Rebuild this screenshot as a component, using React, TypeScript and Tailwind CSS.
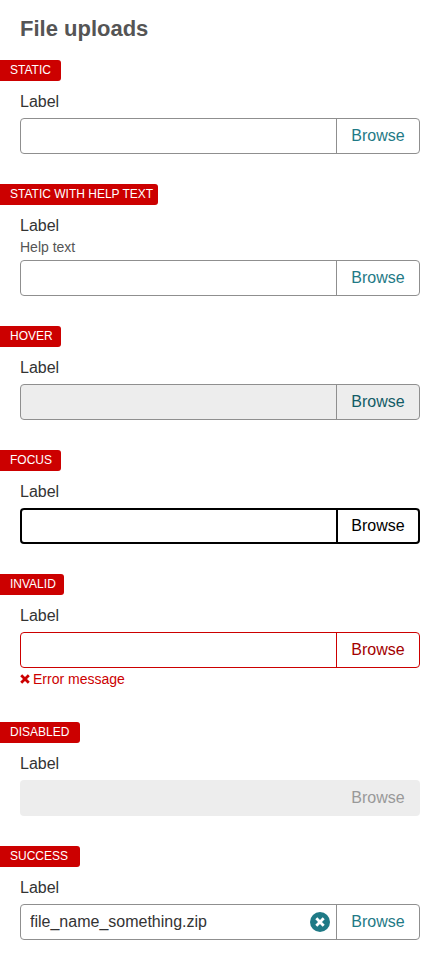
import { useId, useState } from "react";

type State = "static" | "hover" | "focus" | "invalid" | "disabled";

const frames: Record<State, string> = {
  static: "border border-[#8f8f8f] bg-white",
  hover: "border border-[#8f8f8f] bg-[#ededed]",
  focus: "border-2 border-black bg-white",
  invalid: "border border-[#cc0000] bg-white",
  disabled: "bg-[#ededed]",
};

const buttons: Record<State, string> = {
  static: "w-[83px] border-l border-[#8f8f8f] text-[#1f7a86]",
  hover: "w-[83px] border-l border-[#8f8f8f] text-[#135c66]",
  focus: "w-[82px] border-l-2 border-black text-black",
  invalid: "w-[83px] border-l border-[#cc0000] text-[#a30000]",
  disabled: "w-[84px] text-[#999999]",
};

const badges = {
  sm: "w-[61px]",
  md: "w-16",
  lg: "w-20",
  xl: "w-[158px]",
};

interface UploadProps {
  title: string;
  badge?: keyof typeof badges;
  state?: State;
  help?: string;
  error?: string;
  file?: string;
}

function Upload({ title, badge = "sm", state = "static", help, error, file = "" }: UploadProps) {
  const id = useId();
  const [name, setName] = useState(file);
  const disabled = state === "disabled";

  return (
    <section>
      <h2
        className={`rounded-r-[3px] bg-[#cc0000] pl-[10px] text-[12px] leading-[21px] whitespace-nowrap text-white uppercase ${badges[badge]}`}
      >
        {title}
      </h2>
      <div className="px-5 pt-[9px]">
        <label htmlFor={id} className="block text-base leading-6">
          Label
        </label>
        {help && (
          <p id={`${id}-help`} className="text-[14px] leading-[18px] text-[#555555]">
            {help}
          </p>
        )}
        <div className={`mt-1 flex h-9 overflow-hidden rounded-[4px] ${frames[state]}`}>
          <input
            id={id}
            type="text"
            readOnly
            disabled={disabled}
            value={name}
            aria-invalid={state === "invalid"}
            aria-describedby={error ? `${id}-error` : help ? `${id}-help` : undefined}
            className="min-w-0 flex-1 bg-transparent px-[9px] text-base outline-none"
          />
          {name && (
            <button
              type="button"
              aria-label="Remove file"
              onClick={() => setName("")}
              className="mr-[6px] size-5 shrink-0 self-center"
            >
              <svg viewBox="0 0 20 20" className="size-5" aria-hidden="true">
                <circle cx="10" cy="10" r="10" fill="#1f7a86" />
                <path d="M6.3 6.3 13.7 13.7M13.7 6.3 6.3 13.7" stroke="#fff" strokeWidth="2.8" />
              </svg>
            </button>
          )}
          <button
            type="button"
            disabled={disabled}
            className={`shrink-0 text-center text-base ${buttons[state]}`}
          >
            Browse
          </button>
        </div>
        {error && (
          <p
            id={`${id}-error`}
            className="flex items-center gap-[3px] pb-[2px] text-[14px] leading-[22px] text-[#cc0000]"
          >
            <svg viewBox="0 0 10 10" className="size-[10px]" aria-hidden="true">
              <path d="M1.2 1.2 8.8 8.8M8.8 1.2 1.2 8.8" stroke="currentColor" strokeWidth="2.8" />
            </svg>
            {error}
          </p>
        )}
      </div>
    </section>
  );
}

export default function App() {
  return (
    <main className="bg-white pt-4 pb-5 font-['Liberation_Sans',Arial,sans-serif] text-[#333333]">
      <h1 className="px-5 text-[22px] leading-[26px] font-bold text-[#555555]">File uploads</h1>
      <div className="flex flex-col gap-[30px] pt-[18px]">
        <Upload title="Static" />
        <Upload title="Static with help text" badge="xl" help="Help text" />
        <Upload title="Hover" state="hover" />
        <Upload title="Focus" state="focus" />
        <Upload title="Invalid" badge="md" state="invalid" error="Error message" />
        <Upload title="Disabled" badge="lg" state="disabled" />
        <Upload title="Success" badge="lg" file="file_name_something.zip" />
      </div>
    </main>
  );
}
